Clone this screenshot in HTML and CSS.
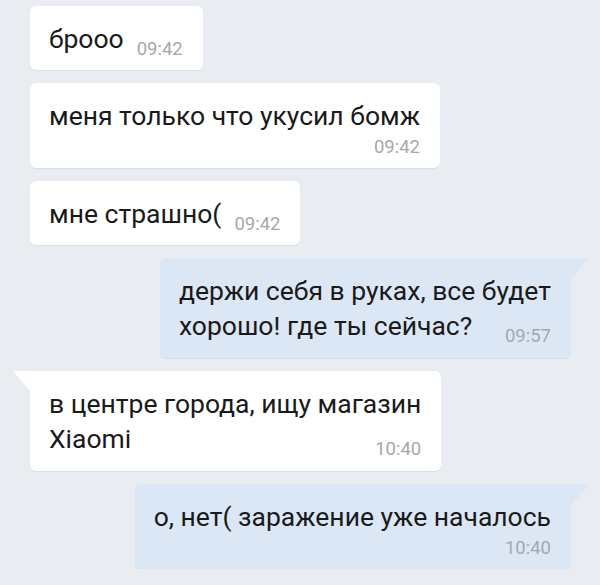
FILE: index.html
```html
<!DOCTYPE html>
<html lang="ru">
<head>
<meta charset="utf-8">
<link rel="stylesheet" href="styles.css">
</head>
<body>
<div class="chat">
  <div class="msg in">
    <div class="bubble inline"><span class="text">брооо</span><span class="time">09:42</span></div>
  </div>
  <div class="msg in">
    <div class="bubble below"><div class="text">меня только что укусил бомж</div><div class="time">09:42</div></div>
  </div>
  <div class="msg in">
    <div class="bubble inline"><span class="text">мне страшно(</span><span class="time">09:42</span></div>
  </div>
  <div class="msg out">
    <div class="bubble overlay tail-right"><div class="text">держи себя в руках, все будет<br>хорошо! где ты сейчас?</div><div class="time">09:57</div></div>
  </div>
  <div class="msg in">
    <div class="bubble overlay tail-left"><div class="text">в центре города, ищу магазин<br>Xiaomi</div><div class="time">10:40</div></div>
  </div>
  <div class="msg out">
    <div class="bubble below tail-right"><div class="text">о, нет( заражение уже началось</div><div class="time">10:40</div></div>
  </div>
</div>
</body>
</html>
```
FILE: styles.css
```css
html, body {
  margin: 0;
  background: #e9ecf1;
}
body {
  font-family: Roboto, "Noto Sans", sans-serif;
}
.chat {
  display: flex;
  flex-direction: column;
  gap: 13px;
  padding: 6px 29px 0 30px;
}
.msg {
  display: flex;
}
.msg.out {
  justify-content: flex-end;
}
.bubble {
  position: relative;
  background: #ffffff;
  border-radius: 6px;
  padding: 15px 20px 14px 19px;
  font-size: 26.5px;
  line-height: 35px;
  color: #1a1a1a;
  box-shadow: 0 1px 1px rgba(0, 0, 0, 0.07);
}
.out .bubble {
  background: #dce7f6;
}
.time {
  font-size: 18.5px;
  line-height: 20px;
  color: #a4a8ae;
}
.bubble.inline {
  display: flex;
  align-items: flex-end;
  gap: 13px;
}
.bubble.inline .time {
  margin-bottom: -3px;
}
.bubble.below .time {
  text-align: right;
  margin-top: 4px;
  margin-bottom: -3px;
}
.bubble.overlay {
  display: grid;
  padding-bottom: 15px;
}
.bubble.overlay > * {
  grid-area: 1 / 1;
}
.bubble.overlay .time {
  justify-self: end;
  align-self: end;
  margin-bottom: -3px;
}
.bubble.tail-right {
  border-top-right-radius: 0;
}
.bubble.tail-right::before {
  content: "";
  position: absolute;
  top: 0;
  right: -18px;
  width: 18px;
  height: 22px;
  background: inherit;
  clip-path: polygon(0 0, 100% 0, 0 100%);
}
.bubble.tail-left {
  border-top-left-radius: 0;
}
.bubble.tail-left::before {
  content: "";
  position: absolute;
  top: 0;
  left: -17px;
  width: 17px;
  height: 20px;
  background: inherit;
  clip-path: polygon(0 0, 100% 0, 100% 100%);
}
```
